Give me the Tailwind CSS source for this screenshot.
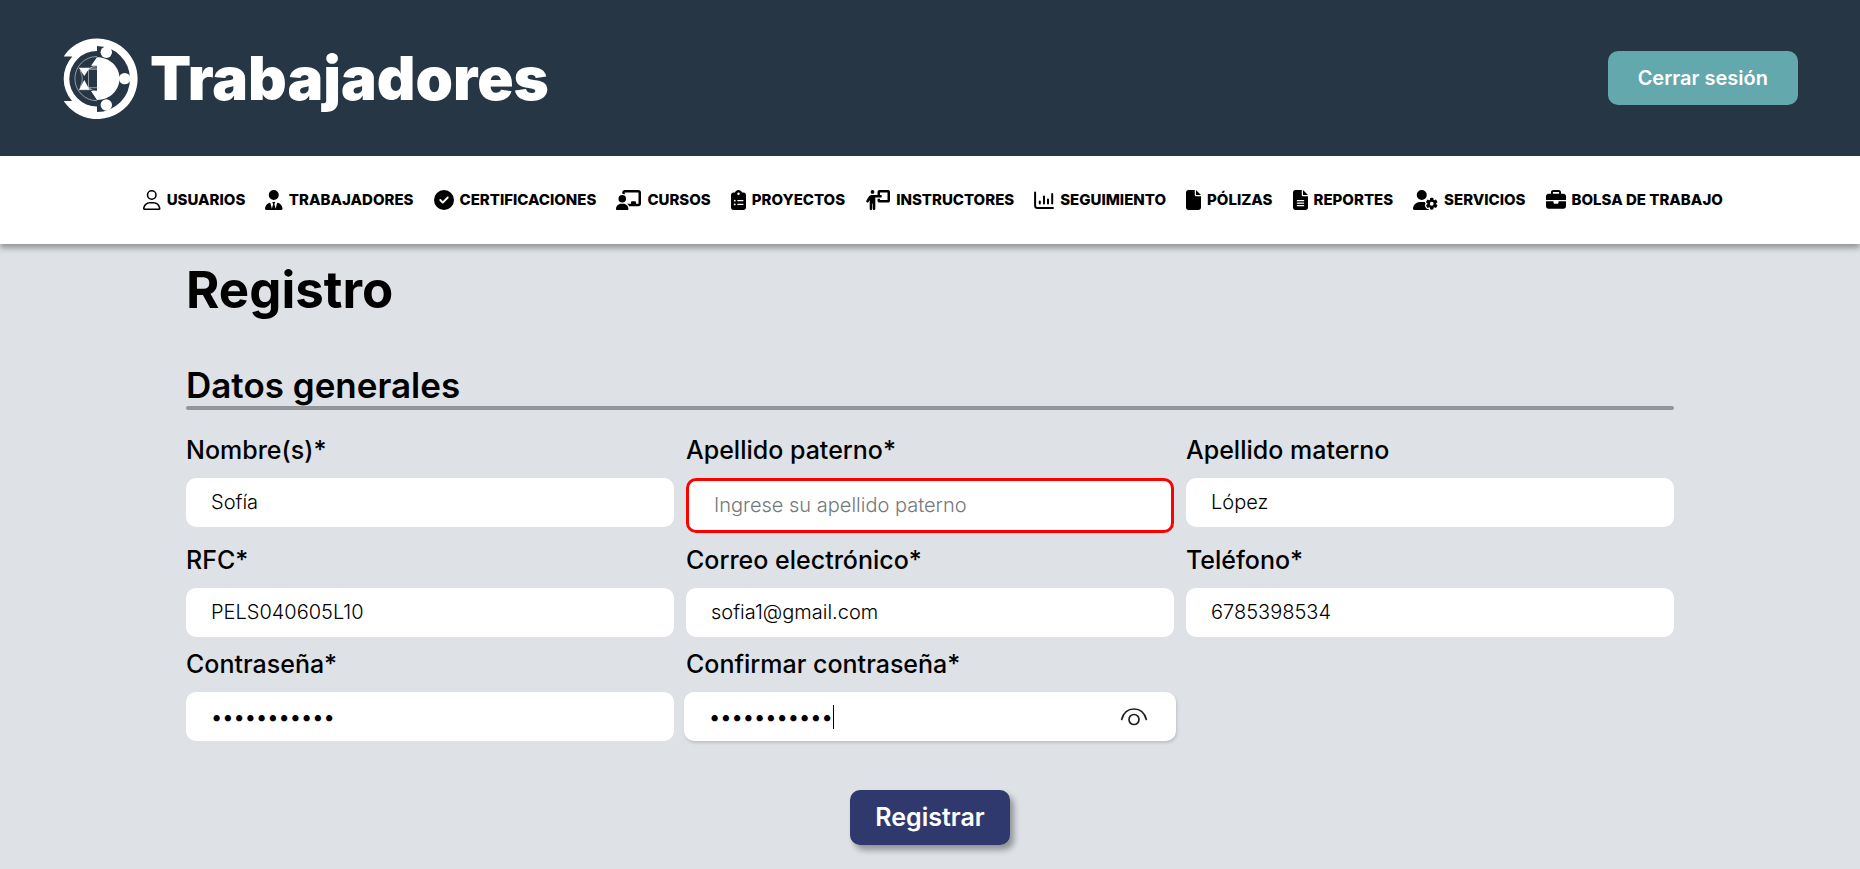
<!DOCTYPE html>
<html lang="es">
<head>
<meta charset="utf-8">
<meta name="viewport" content="width=device-width, initial-scale=1">
<title>Trabajadores - Registro</title>
<script src="https://cdn.jsdelivr.net/npm/@tailwindcss/browser@4"></script>
</head>
<body class="min-h-screen bg-[#dee2e6] font-['Inter',sans-serif] text-black">

<header class="flex h-39 items-center justify-between bg-[#273645] px-[62px]">
  <div class="flex items-center gap-3">
    <svg class="h-[82px] w-[76px]" viewBox="22 17 76 82" fill="#fff" aria-hidden="true">
      <path d="M23.700 36.500A40.300 40.300 0 1 1 23.700 81L32 81A33.500 33.500 0 0 1 32.300 36.500ZM57 26V31A27.500 27.500 0 0 0 57 86.500V92A33 33 0 0 0 57 26Z" fill-rule="evenodd"/>
      <path d="M57 37.300C70 37.300 79.500 47 79.500 58.600S70 80 57 80Z"/>
      <circle cx="66.300" cy="32.300" r="5.700"/><circle cx="84.700" cy="58.600" r="5.700"/><circle cx="66.300" cy="85" r="5.700"/>
      <path d="M39 48H49.500L44.300 56ZM39 69.700H49.500L44.300 60ZM51 45.700 57 37.300V45.700ZM51 71H57V80Z"/>
      <path d="M57 36.500A22 22 0 0 0 57 80.700M57 49.300H48.500V67.700H57M39 48H57M39 69.700H51M40 50.500C43 56 43 62 40 67M48.500 49.300Q53 45.500 57 46M48.500 67.700Q53 71.500 57 71" fill="none" stroke="#fff" stroke-width=".5"/>
    </svg>
    <span class="text-[60px] leading-[73px] font-black text-white">Trabajadores</span>
  </div>
  <button type="button" class="rounded-[10px] bg-[#62a8ac] px-[30px] py-[15px] text-xl leading-6 font-semibold text-white">Cerrar sesión</button>
</header>

<nav class="relative flex h-22 items-center justify-center gap-5 bg-white pl-1.5 text-[15px] leading-5 font-extrabold whitespace-nowrap shadow-[0_4px_6px_rgba(0,0,0,0.35)]">
  <a href="#" class="flex items-center gap-1.5">
    <svg class="h-5" viewBox="0 0 448 512" aria-hidden="true"><path d="M312 128a88 88 0 1 0-176 0 88 88 0 1 0 176 0zM96 128a128 128 0 1 1 256 0A128 128 0 1 1 96 128zM41 472H407c-5-71-64-128-137.300-128H178.300c-73 0-132 57-137.300 128zM0 482.300C0 383.800 79.800 304 178.300 304h91.400C368.200 304 448 383.800 448 482.300c0 16.400-13.300 29.700-29.700 29.700H29.700C13.300 512 0 498.700 0 482.300z"/></svg>
    <span>USUARIOS</span>
  </a>
  <a href="#" class="flex items-center gap-1.5">
    <svg class="h-5" viewBox="0 0 448 512" aria-hidden="true"><path d="M96 128a128 128 0 1 0 256 0A128 128 0 1 0 96 128zm94.500 200.200l18.600 31L175.800 483.100l-36-146.900c-2-8.100-9.800-13.400-17.900-11.300C51.900 342.400 0 405.800 0 481.300c0 17 13.800 30.700 30.700 30.700H162.500H417.300c17 0 30.700-13.800 30.700-30.700c0-75.500-51.900-138.900-121.900-156.400c-8.100-2-15.900 3.300-17.900 11.300l-36 146.900L238.900 359.200l18.600-31c6.400-10.700-1.300-24.200-13.700-24.200H204.300c-12.400 0-20.100 13.600-13.700 24.200z"/></svg>
    <span>TRABAJADORES</span>
  </a>
  <a href="#" class="flex items-center gap-1.5">
    <svg class="h-5" viewBox="0 0 512 512" aria-hidden="true"><path d="M256 512A256 256 0 1 0 256 0a256 256 0 1 0 0 512zM369 209L241 337c-9.400 9.400-24.600 9.400-33.900 0l-64-64c-9.400-9.400-9.400-24.600 0-33.900s24.600-9.400 33.900 0l47 47L335 175c9.400-9.400 24.600-9.400 33.900 0s9.400 24.600 0 33.900z"/></svg>
    <span>CERTIFICACIONES</span>
  </a>
  <a href="#" class="flex items-center gap-1.5">
    <svg class="h-5" viewBox="0 0 640 512" aria-hidden="true"><path d="M160 64c0-35.300 28.700-64 64-64H576c35.300 0 64 28.700 64 64V352c0 35.300-28.700 64-64 64H336.800c-11.800-25.500-29.900-47.500-52.400-64H384V320c0-17.700 14.300-32 32-32h64c17.700 0 32 14.300 32 32v32h64V64L224 64v49.100C205.200 102.200 183.300 96 160 96V64zm0 64a96 96 0 1 1 0 192 96 96 0 1 1 0-192zM133.300 352h53.300C260.300 352 320 411.700 320 485.300c0 14.700-11.900 26.700-26.700 26.700H26.700C11.900 512 0 500.100 0 485.300C0 411.700 59.700 352 133.300 352z"/></svg>
    <span>CURSOS</span>
  </a>
  <a href="#" class="flex items-center gap-1.5">
    <svg class="h-5" viewBox="0 0 384 512" aria-hidden="true"><path d="M192 0c-41.800 0-77.400 26.700-90.500 64H64C28.700 64 0 92.700 0 128V448c0 35.300 28.700 64 64 64H320c35.300 0 64-28.700 64-64V128c0-35.300-28.700-64-64-64H282.500C269.400 26.700 233.800 0 192 0zm0 64a32 32 0 1 1 0 64 32 32 0 1 1 0-64zM72 272a24 24 0 1 1 48 0 24 24 0 1 1 -48 0zm104-16H304c8.800 0 16 7.200 16 16s-7.200 16-16 16H176c-8.800 0-16-7.200-16-16s7.200-16 16-16zM72 368a24 24 0 1 1 48 0 24 24 0 1 1 -48 0zm88 0c0-8.800 7.200-16 16-16H304c8.800 0 16 7.200 16 16s-7.200 16-16 16H176c-8.800 0-16-7.200-16-16z"/></svg>
    <span>PROYECTOS</span>
  </a>
  <a href="#" class="flex items-center gap-1.5">
    <svg class="h-5" viewBox="0 0 640 512" aria-hidden="true"><path d="M192 96a48 48 0 1 0 0-96 48 48 0 1 0 0 96zm-8 384V352h16V480c0 17.700 14.300 32 32 32s32-14.300 32-32V192h56 64 16c17.700 0 32-14.300 32-32s-14.300-32-32-32H384V64H576V256H384V224H320v48c0 26.500 21.500 48 48 48H592c26.500 0 48-21.500 48-48V48c0-26.500-21.500-48-48-48H368c-26.500 0-48 21.500-48 48v80H243.100 177.100c-33.700 0-64.900 17.700-82.300 46.600l-58.300 97c-9.100 15.100-4.200 34.800 10.900 43.900s34.800 4.200 43.900-10.900L120 256.900V480c0 17.700 14.300 32 32 32s32-14.300 32-32z"/></svg>
    <span>INSTRUCTORES</span>
  </a>
  <a href="#" class="flex items-center gap-1.5">
    <svg class="h-5" viewBox="0 0 20 20" fill="none" stroke="#000" stroke-width="2" stroke-linecap="round" aria-hidden="true"><path d="M1.100 2.500V15.500Q1.100 18 3.600 18H19M5.800 11.500V13.500M10 6.500V13.500M14 9.500V13.500M18.200 4V13.500"/></svg>
    <span>SEGUIMIENTO</span>
  </a>
  <a href="#" class="flex items-center gap-1.5">
    <svg class="h-5" viewBox="0 0 384 512" aria-hidden="true"><path d="M0 64C0 28.700 28.700 0 64 0H224V128c0 17.700 14.300 32 32 32H384V448c0 35.300-28.700 64-64 64H64c-35.300 0-64-28.700-64-64V64zm384 64H256V0L384 128z"/></svg>
    <span>PÓLIZAS</span>
  </a>
  <a href="#" class="flex items-center gap-1.5">
    <svg class="h-5" viewBox="0 0 384 512" aria-hidden="true"><path d="M64 0C28.700 0 0 28.700 0 64V448c0 35.300 28.700 64 64 64H320c35.300 0 64-28.700 64-64V160H256c-17.700 0-32-14.300-32-32V0H64zM256 0V128H384L256 0zM112 256H272c8.800 0 16 7.200 16 16s-7.200 16-16 16H112c-8.800 0-16-7.200-16-16s7.200-16 16-16zm0 64H272c8.800 0 16 7.200 16 16s-7.200 16-16 16H112c-8.800 0-16-7.200-16-16s7.200-16 16-16zm0 64H272c8.800 0 16 7.200 16 16s-7.200 16-16 16H112c-8.800 0-16-7.200-16-16s7.200-16 16-16z"/></svg>
    <span>REPORTES</span>
  </a>
  <a href="#" class="flex items-center gap-1.5">
    <svg class="h-5" viewBox="0 0 640 512" aria-hidden="true"><path d="M224 0a128 128 0 1 1 0 256A128 128 0 1 1 224 0zM178.300 304h91.400c11.800 0 23.400 1.200 34.500 3.300c-2.100 18.500 7.400 35.600 21.800 44.800c-16.600 10.600-26.700 31.600-20 53.300c4 12.900 9.400 25.500 16.400 37.600s15.200 23.100 24.400 33c15.700 16.900 39.600 18.400 57.200 8.700v.9c0 9.200 2.700 18.500 7.900 26.300H29.700C13.300 512 0 498.700 0 482.300C0 383.800 79.800 304 178.300 304zM436 218.200c0-7 4.500-13.300 11.300-14.800c10.500-2.400 21.500-3.700 32.700-3.700s22.200 1.300 32.700 3.700c6.800 1.500 11.300 7.800 11.300 14.800v30.600c7.900 3.400 15.400 7.700 22.300 12.800l24.900-14.300c6.100-3.500 13.700-2.700 18.500 2.400c7.600 8.100 14.300 17.200 20.100 27.200s10.300 20.400 13.500 31c2.100 6.700-1.100 13.700-7.200 17.200l-25 14.400c.4 4 .7 8.100 .7 12.300s-.2 8.200-.7 12.300l25 14.400c6.100 3.500 9.200 10.500 7.200 17.200c-3.300 10.600-7.800 21-13.500 31s-12.500 19.100-20.100 27.200c-4.800 5.100-12.500 5.900-18.500 2.400l-24.900-14.300c-6.900 5.100-14.300 9.400-22.300 12.800l0 30.600c0 7-4.500 13.300-11.300 14.800c-10.500 2.400-21.500 3.700-32.700 3.700s-22.200-1.300-32.700-3.700c-6.800-1.500-11.300-7.800-11.300-14.800V454.800c-8-3.400-15.600-7.700-22.500-12.900l-24.700 14.300c-6.100 3.500-13.700 2.700-18.500-2.400c-7.600-8.100-14.300-17.200-20.100-27.200s-10.300-20.400-13.500-31c-2.100-6.700 1.100-13.700 7.200-17.200l24.800-14.300c-.4-4.100-.7-8.200-.7-12.400s.2-8.300 .7-12.400L343.800 325c-6.100-3.500-9.200-10.500-7.200-17.200c3.300-10.600 7.700-21 13.500-31s12.500-19.100 20.100-27.200c4.800-5.100 12.400-5.900 18.500-2.400l24.800 14.300c6.900-5.100 14.500-9.400 22.500-12.900V218.200zm92.100 133.500a48.100 48.100 0 1 0 -96.100 0 48.100 48.100 0 1 0 96.100 0z"/></svg>
    <span>SERVICIOS</span>
  </a>
  <a href="#" class="flex items-center gap-1.5">
    <svg class="h-5" viewBox="0 0 512 512" aria-hidden="true"><path d="M184 48H328c4.400 0 8 3.600 8 8V96H176V56c0-4.400 3.600-8 8-8zm-56 8V96H64C28.700 96 0 124.700 0 160v96H192 320 512V160c0-35.300-28.700-64-64-64H384V56c0-30.900-25.100-56-56-56H184c-30.900 0-56 25.100-56 56zM512 288H320v32c0 17.700-14.300 32-32 32H224c-17.700 0-32-14.300-32-32V288H0V416c0 35.300 28.700 64 64 64H448c35.300 0 64-28.700 64-64V288z"/></svg>
    <span>BOLSA DE TRABAJO</span>
  </a>
</nav>

<main class="mx-auto w-4/5 pt-4">
  <h1 class="text-[51px] leading-[60px] font-bold">Registro</h1>
  <form>
    <h2 class="mt-11 text-[35px] leading-[42px] font-semibold">Datos generales</h2>
    <hr class="h-1 rounded-sm border-0 bg-[#939699]">
    <div class="mt-[25px] grid grid-cols-3 items-start gap-3">
      <div class="flex flex-col gap-[13px]">
        <label for="nombre" class="text-[25px] leading-[30px] font-medium">Nombre(s)*</label>
        <input id="nombre" type="text" value="Sofía" class="h-[49px] w-full rounded-[10px] bg-white px-[25px] pb-0.5 text-xl font-light">
      </div>
      <div class="flex flex-col gap-[13px]">
        <label for="paterno" class="text-[25px] leading-[30px] font-medium">Apellido paterno*</label>
        <input id="paterno" type="text" placeholder="Ingrese su apellido paterno" class="h-[55px] w-full rounded-[10px] border-3 border-[#ff0000] bg-white px-[25px] pb-0.5 text-xl font-light placeholder:text-[#75787b]">
      </div>
      <div class="flex flex-col gap-[13px]">
        <label for="materno" class="text-[25px] leading-[30px] font-medium">Apellido materno</label>
        <input id="materno" type="text" value="López" class="h-[49px] w-full rounded-[10px] bg-white px-[25px] pb-0.5 text-xl font-light">
      </div>
      <div class="flex flex-col gap-[13px]">
        <label for="rfc" class="text-[25px] leading-[30px] font-medium">RFC*</label>
        <input id="rfc" type="text" value="PELS040605L10" class="h-[49px] w-full rounded-[10px] bg-white px-[25px] pb-0.5 text-xl font-light">
      </div>
      <div class="flex flex-col gap-[13px]">
        <label for="correo" class="text-[25px] leading-[30px] font-medium">Correo electrónico*</label>
        <input id="correo" type="email" value="sofia1@gmail.com" class="h-[49px] w-full rounded-[10px] bg-white px-[25px] pb-0.5 text-xl font-light">
      </div>
      <div class="flex flex-col gap-[13px]">
        <label for="telefono" class="text-[25px] leading-[30px] font-medium">Teléfono*</label>
        <input id="telefono" type="tel" value="6785398534" class="h-[49px] w-full rounded-[10px] bg-white px-[25px] pb-0.5 text-xl font-light">
      </div>
      <div class="flex flex-col gap-[13px]">
        <label for="clave" class="text-[25px] leading-[30px] font-medium">Contraseña*</label>
        <input id="clave" type="password" value="contrasena1" class="h-[49px] w-full rounded-[10px] bg-white px-[25px] text-xl font-normal">
      </div>
      <div class="flex flex-col gap-[13px]">
        <label for="confirmar" class="text-[25px] leading-[30px] font-medium">Confirmar contraseña*</label>
        <div class="relative -mx-0.5">
          <input id="confirmar" type="password" value="contrasena1" class="h-[49px] w-full rounded-[10px] bg-white px-[25px] text-xl font-normal shadow-[1px_2px_3px_rgba(0,0,0,0.15)]">
          <span class="absolute top-[13px] left-[149px] h-6 w-px bg-black"></span>
          <button type="button" aria-label="Mostrar contraseña" class="absolute top-3 right-7">
            <svg class="h-6 w-7" viewBox="0 0 28 24" fill="none" stroke="#1f1f1f" stroke-width="1.700" stroke-linecap="round" aria-hidden="true"><path d="M1.700 15.500C3.500 8.500 8.500 5 14 5S24.500 8.500 26.300 15.500"/><circle cx="14" cy="15.500" r="5"/></svg>
          </button>
        </div>
      </div>
    </div>
    <div class="mt-[49px] flex justify-center pb-6">
      <button type="submit" class="rounded-[10px] bg-[#30396d] px-[25px] py-3 text-[25px] leading-[31px] font-semibold text-white shadow-[4px_5px_6px_rgba(0,0,0,0.35)]">Registrar</button>
    </div>
  </form>
</main>
</body>
</html>
